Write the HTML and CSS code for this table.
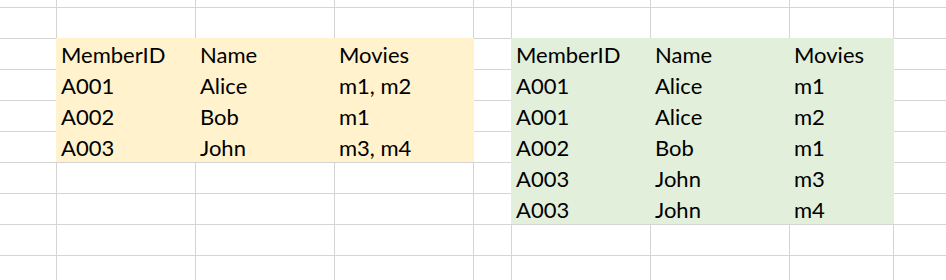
FILE: index.html
```html
<!DOCTYPE html>
<html>
<head>
<meta charset="utf-8">
<link rel="stylesheet" href="styles.css">
</head>
<body>
<div class="sheet">
  <div class="c"></div><div class="c"></div><div class="c"></div><div class="c"></div><div class="c"></div><div class="c"></div><div class="c"></div><div class="c"></div><div class="c"></div>
  <div class="c"></div><div class="c"></div><div class="c"></div><div class="c"></div><div class="c"></div><div class="c"></div><div class="c"></div><div class="c"></div><div class="c"></div>
  <div class="c"></div><div class="c"></div><div class="c"></div><div class="c"></div><div class="c"></div><div class="c"></div><div class="c"></div><div class="c"></div><div class="c"></div>
  <div class="c"></div><div class="c"></div><div class="c"></div><div class="c"></div><div class="c"></div><div class="c"></div><div class="c"></div><div class="c"></div><div class="c"></div>
  <div class="c"></div><div class="c"></div><div class="c"></div><div class="c"></div><div class="c"></div><div class="c"></div><div class="c"></div><div class="c"></div><div class="c"></div>
  <div class="c"></div><div class="c"></div><div class="c"></div><div class="c"></div><div class="c"></div><div class="c"></div><div class="c"></div><div class="c"></div><div class="c"></div>
  <div class="c"></div><div class="c"></div><div class="c"></div><div class="c"></div><div class="c"></div><div class="c"></div>

  <div class="block block-left">
    <div class="cell">MemberID</div><div class="cell">Name</div><div class="cell">Movies</div>
    <div class="cell">A001</div><div class="cell">Alice</div><div class="cell">m1, m2</div>
    <div class="cell">A002</div><div class="cell">Bob</div><div class="cell">m1</div>
    <div class="cell">A003</div><div class="cell">John</div><div class="cell">m3, m4</div>
  </div>

  <div class="block block-right">
    <div class="cell">MemberID</div><div class="cell">Name</div><div class="cell">Movies</div>
    <div class="cell">A001</div><div class="cell">Alice</div><div class="cell">m1</div>
    <div class="cell">A001</div><div class="cell">Alice</div><div class="cell">m2</div>
    <div class="cell">A002</div><div class="cell">Bob</div><div class="cell">m1</div>
    <div class="cell">A003</div><div class="cell">John</div><div class="cell">m3</div>
    <div class="cell">A003</div><div class="cell">John</div><div class="cell">m4</div>
  </div>
</div>
</body>
</html>
```

FILE: styles.css
```css
html, body {
  margin: 0;
  padding: 0;
  background: #ffffff;
}

body {
  width: 946px;
  height: 280px;
  overflow: hidden;
  font-family: Lato, "Liberation Sans", sans-serif;
  color: #000000;
}

.sheet {
  display: grid;
  width: 946px;
  height: 280px;
  background: #d4d4d4;
  gap: 1px;
  grid-template-columns: 56px 138px 138px 138px 37px 138px 138px 103px 1fr;
  grid-template-rows: 7px repeat(8, 30px) 1fr;
}

.c {
  background: #ffffff;
}

.block {
  display: grid;
  grid-auto-rows: 31px;
  margin: -1px -1px 0 -1px;
  font-size: 22px;
  line-height: 29px;
}

.block-left {
  grid-column: 2 / 5;
  grid-row: 3 / 7;
  background: #fff2cc;
  grid-template-columns: 139px 139px 1fr;
}

.block-right {
  grid-column: 6 / 9;
  grid-row: 3 / 9;
  background: #e2efda;
  grid-template-columns: 139px 139px 1fr;
}

.cell {
  padding: 2px 0 0 5px;
  white-space: nowrap;
}
```
